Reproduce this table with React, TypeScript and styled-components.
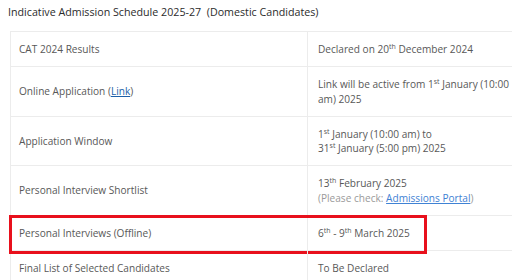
import React from 'react';
import styled, { createGlobalStyle } from 'styled-components';

const Global = createGlobalStyle`
  html, body {
    margin: 0;
    padding: 0;
    background: #fff;
    overflow: hidden;
  }
  body {
    font-family: "Open Sans", "Liberation Sans", sans-serif;
    font-size: 10.1px;
    line-height: 14.5px;
    color: #585858;
  }
`;

const Page = styled.div`
  padding: 5px 0 0 8px;
  width: 540px;
`;

const Heading = styled.h1`
  margin: 0 0 11px 0;
  font-size: 10.7px;
  font-weight: 400;
  line-height: 15px;
  color: #2b2b2b;
  white-space: pre;
`;

const Table = styled.div`
  margin-left: 2px;
  width: 516px;
  border-top: 1px solid #ececec;
  border-left: 1px solid #ececec;
`;

const Row = styled.div`
  position: relative;
  display: grid;
  grid-template-columns: 296px 1fr;
  border-bottom: 1px solid #ececec;
`;

const Cell = styled.div<{ $right?: boolean }>`
  display: flex;
  flex-direction: column;
  justify-content: center;
  padding: ${p => (p.$right ? '10px 6px 9.5px 10px' : '10px 8px 9.5px 8px')};
  border-left: ${p => (p.$right ? '1px solid #ececec' : 'none')};
`;

const Sup = styled.sup`
  font-size: 7px;
  line-height: 0;
  vertical-align: 4px;
`;

const Link = styled.a<{ $light?: boolean }>`
  color: ${p => (p.$light ? '#3f82d4' : '#1d5fa8')};
  text-decoration: underline;
`;

const Muted = styled.span`
  color: #9a9a9a;
`;

const Highlight = styled.div`
  position: absolute;
  left: -2px;
  top: -1px;
  width: 418px;
  height: 39px;
  border: 3px solid #e8101c;
  box-sizing: border-box;
  pointer-events: none;
`;

export default function App() {
  return (
    <>
      <Global />
      <Page>
        <Heading>Indicative Admission Schedule 2025-27  (Domestic Candidates)</Heading>
        <Table>
          <Row>
            <Cell>CAT 2024 Results</Cell>
            <Cell $right>
              <span>Declared on 20<Sup>th</Sup> December 2024</span>
            </Cell>
          </Row>
          <Row>
            <Cell>
              <span>Online Application (<Link href="#">Link</Link>)</span>
            </Cell>
            <Cell $right>
              <span>Link will be active from 1<Sup>st</Sup> January (10:00 am) 2025</span>
            </Cell>
          </Row>
          <Row>
            <Cell>Application Window</Cell>
            <Cell $right>
              <span>1<Sup>st</Sup> January (10:00 am) to</span>
              <span>31<Sup>st</Sup> January (5:00 pm) 2025</span>
            </Cell>
          </Row>
          <Row>
            <Cell>Personal Interview Shortlist</Cell>
            <Cell $right>
              <span>13<Sup>th</Sup> February 2025</span>
              <Muted>(Please check: <Link href="#" $light>Admissions Portal</Link>)</Muted>
            </Cell>
          </Row>
          <Row>
            <Cell>Personal Interviews (Offline)</Cell>
            <Cell $right>
              <span>6<Sup>th</Sup> - 9<Sup>th</Sup> March 2025</span>
            </Cell>
            <Highlight />
          </Row>
          <Row>
            <Cell>Final List of Selected Candidates</Cell>
            <Cell $right>To Be Declared</Cell>
          </Row>
        </Table>
      </Page>
    </>
  );
}
